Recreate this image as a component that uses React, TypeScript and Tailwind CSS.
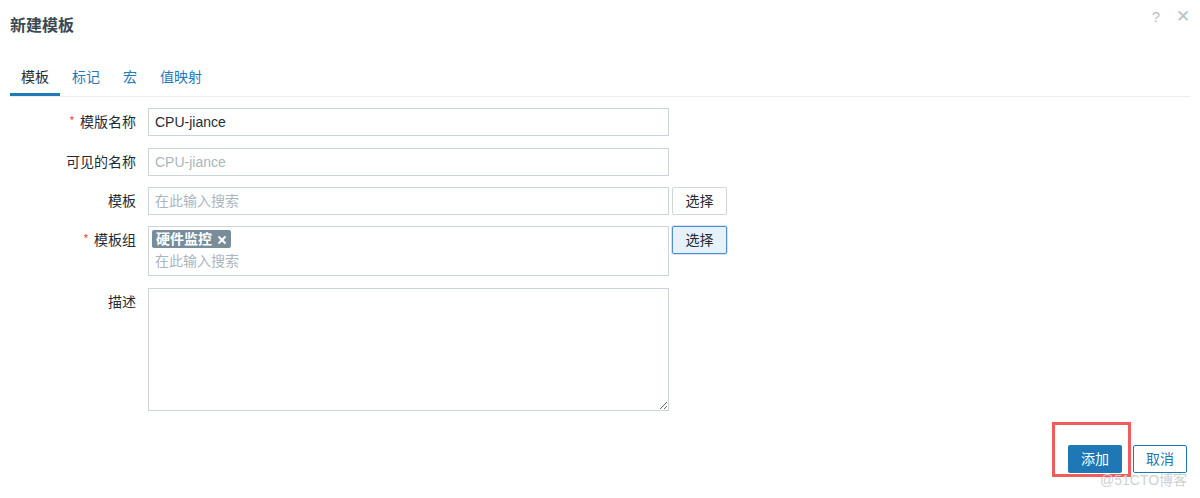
import React from "react";

const font = { fontFamily: '"Liberation Sans", "Noto Sans CJK SC", sans-serif' };

const Label = ({ text, required, className = "" }: { text: string; required?: boolean; className?: string }) => (
  <div className={"flex h-[28px] items-center justify-end text-[14px] leading-[20px] text-[#1f2c33] " + className}>
    {required && <span className="mr-[6px] -mt-[4px] text-[11px] text-[#e33734]">*</span>}
    {text}
  </div>
);

const SelectButton = ({ active }: { active?: boolean }) => (
  <button
    className={
      "h-[28px] w-[55px] rounded-[2px] border text-[14px] text-[#1f2c33] " +
      (active ? "border-[#4f8fc9] bg-[#e6f1fb] shadow-[0_0_0_1px_#cfe3f5]" : "border-[#cfd7db] bg-white")
    }
  >
    选择
  </button>
);

const tabs = ["模板", "标记", "宏", "值映射"];

export default function App() {
  return (
    <div className="relative h-[498px] w-[1200px] overflow-hidden bg-white" style={font}>
      {/* header */}
      <div className="flex h-[59px] justify-between px-[10px]">
        <h1 className="pt-[16px] text-[16px] font-bold leading-[20px] text-[#3a4852]">新建模板</h1>
        <div className="flex gap-[16px] pt-[8px] text-[15px] leading-[18px] text-[#b7c1c7]">
          <span>?</span>
          <span className="text-[17px]">✕</span>
        </div>
      </div>

      {/* tabs */}
      <div className="mx-[10px] flex gap-[1px] border-b border-[#ebeef0]">
        {tabs.map((t, i) => (
          <div
            key={t}
            className={
              "border-b-[3px] px-[11px] pb-[6px] pt-[8px] text-[14px] leading-[20px] " +
              (i === 0 ? "border-[#1f7ab8] text-[#1f2c33]" : "border-transparent text-[#1f7ab8]")
            }
          >
            {t}
          </div>
        ))}
      </div>

      {/* form */}
      <div className="grid grid-cols-[136px_521px_auto] items-start gap-x-[12px] gap-y-[11px] pt-[11px]">
        <Label text="模版名称" required />
        <input
          readOnly
          value="CPU-jiance"
          className="h-[28px] w-full border border-[#ccd5d9] px-[6px] text-[14px] text-[#1f2c33] outline-none"
        />
        <div />

        <Label text="可见的名称" className="mt-[1px]" />
        <input
          readOnly
          placeholder="CPU-jiance"
          className="mt-[1px] h-[28px] w-full border border-[#ccd5d9] px-[6px] text-[14px] outline-none placeholder:text-[#acb6bc]"
        />
        <div />

        <Label text="模板" />
        <input
          readOnly
          placeholder="在此输入搜索"
          className="h-[28px] w-full border border-[#ccd5d9] px-[6px] text-[14px] outline-none placeholder:text-[#acb6bc]"
        />
        <div className="-ml-[9px]">
          <SelectButton />
        </div>

        <Label text="模板组" required />
        <div className="h-[50px] w-full border border-[#ccd5d9] px-[3px] pt-[3px] leading-[18px]">
          <span className="inline-flex h-[18px] items-center gap-[5px] rounded-[2px] bg-[#778e9a] px-[4px] align-top text-[14px] font-bold leading-[18px] text-white">
            硬件监控
            <svg width="10" height="10" viewBox="0 0 10 10" className="mt-[1px]">
              <path d="M1.5 1.5 L8.5 8.5 M8.5 1.5 L1.5 8.5" stroke="white" strokeWidth="2" />
            </svg>
          </span>
          <div className="mt-[2px] px-[3px] text-[14px] leading-[22px] text-[#acb6bc]">在此输入搜索</div>
        </div>
        <div className="-ml-[9px]">
          <SelectButton active />
        </div>

        <Label text="描述" className="mt-[1px]" />
        <textarea readOnly className="mt-[1px] block h-[123px] w-full border border-[#ccd5d9] outline-none" />
        <div />
      </div>

      {/* footer */}
      <div className="flex justify-end gap-[11px] pr-[13px] pt-[34px]">
        <button className="h-[28px] w-[54px] rounded-[2px] bg-[#1f78b6] text-[14px] text-white">添加</button>
        <button className="h-[28px] w-[54px] rounded-[2px] border border-[#1f78b6] bg-white text-[14px] text-[#1f78b6]">
          取消
        </button>
      </div>

      {/* annotation overlay */}
      <div className="absolute left-[1052px] top-[422px] h-[55px] w-[79px] border-[3px] border-[#f25c5c]" />
      <div className="absolute left-[1100px] top-[470px] text-[14px] leading-[20px] text-[#cdd0d2]">@51CTO博客</div>
    </div>
  );
}
